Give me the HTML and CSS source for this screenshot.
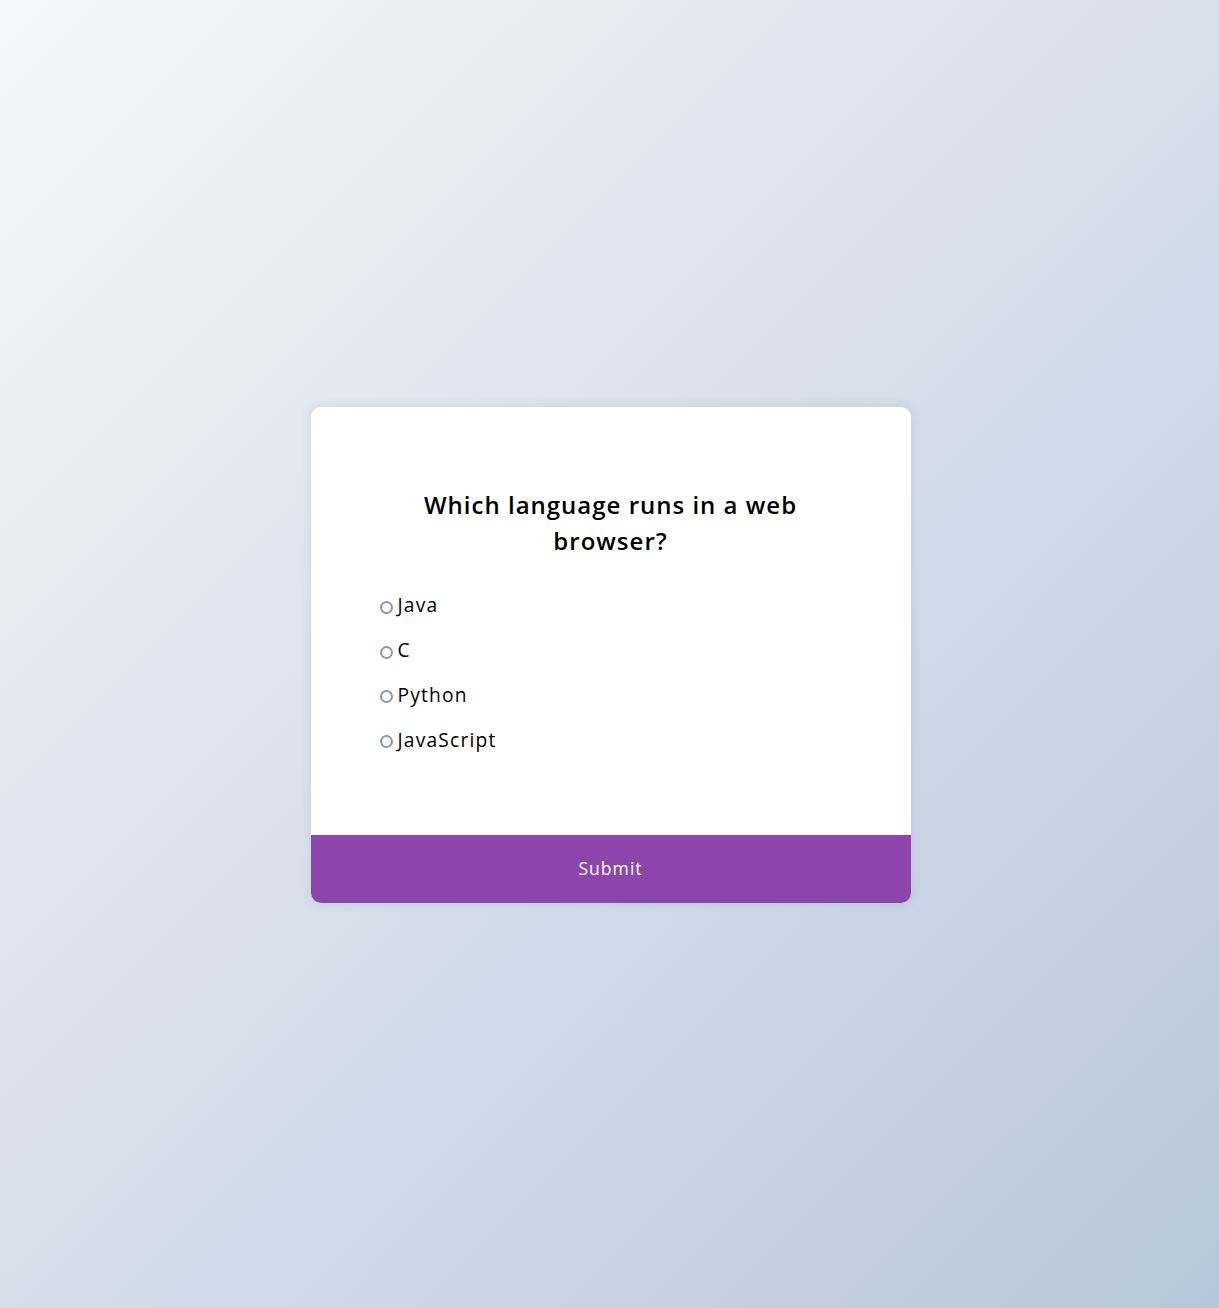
FILE: index.html
```html
<!DOCTYPE html>
<html lang="en">
<head>
<meta charset="UTF-8">
<title>Quiz</title>
<link rel="stylesheet" href="styles.css">
</head>
<body>
  <div class="quiz-container">
    <div class="quiz-header">
      <h2 class="question">Which language runs in a web browser?</h2>
      <ul class="answers">
        <li><input type="radio" name="answer" id="a" class="answer"><label for="a">Java</label></li>
        <li><input type="radio" name="answer" id="b" class="answer"><label for="b">C</label></li>
        <li><input type="radio" name="answer" id="c" class="answer"><label for="c">Python</label></li>
        <li><input type="radio" name="answer" id="d" class="answer"><label for="d">JavaScript</label></li>
      </ul>
    </div>
    <button class="submit">Submit</button>
  </div>
</body>
</html>
```

FILE: styles.css
```css
* { box-sizing: border-box; }

body {
  margin: 0;
  padding: 2px 0 0 2px;
  height: 100vh;
  overflow: hidden;
  display: flex;
  align-items: center;
  justify-content: center;
  background-color: #b8c6db;
  background-image: linear-gradient(315deg, #b8c6db 0%, #f5f7fa 100%);
  font-family: "Open Sans", "Noto Sans", sans-serif;
  color: #000;
}

.quiz-container {
  background-color: #fff;
  border-radius: 10px;
  box-shadow: 0 0 10px 2px rgba(100, 100, 100, 0.1);
  width: 600px;
  overflow: hidden;
}

.quiz-header {
  padding: 64px;
}

.question {
  margin: 0;
  padding: 16px;
  text-align: center;
  font-size: 24px;
  font-weight: 600;
  line-height: 36px;
  letter-spacing: 1px;
}

.answers {
  list-style: none;
  margin: 16px 0 0;
  padding: 0;
}

.answers li {
  font-size: 19.2px;
  line-height: 28.8px;
  margin: 16px 0;
  display: flex;
  align-items: center;
}

.answer {
  appearance: none;
  -webkit-appearance: none;
  width: 13px;
  height: 13px;
  margin: 3px 5px 0 5px;
  border: 2px solid #8f98aa;
  border-radius: 50%;
  background: #fff;
  flex: none;
}

.answers label {
  cursor: pointer;
  letter-spacing: 1.2px;
}

.submit {
  display: block;
  width: 100%;
  border: none;
  background-color: #8e44ad;
  color: #fff;
  font-family: inherit;
  font-size: 17.6px;
  line-height: 26.4px;
  letter-spacing: 1px;
  padding: 20.8px;
  cursor: pointer;
}
```
